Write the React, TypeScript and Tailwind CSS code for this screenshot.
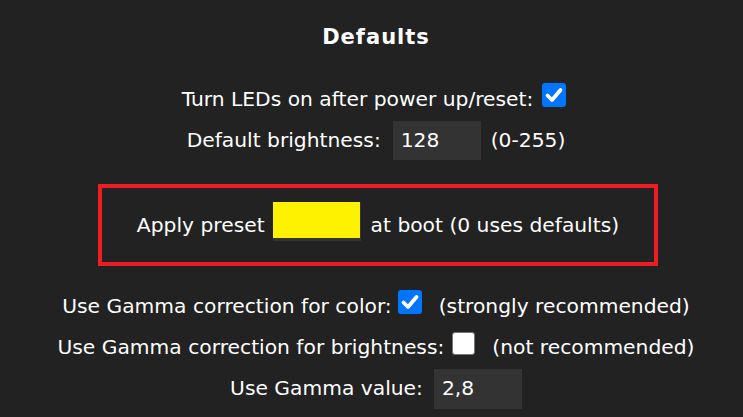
import React from "react";

const font = { fontFamily: '"DejaVu Sans", Verdana, sans-serif' };

function Check({ checked }: { checked: boolean }) {
  if (!checked) {
    return (
      <span className="inline-block h-[23px] w-[23px] shrink-0 rounded-[3px] border border-[#767676] bg-white" />
    );
  }
  return (
    <span className="inline-flex h-[24px] w-[24px] shrink-0 items-center justify-center rounded-[3px] bg-[#0075ff]">
      <svg viewBox="0 0 24 24" className="h-[24px] w-[24px]">
        <path
          d="M5.5 12.5 L10 17 L18.5 7"
          fill="none"
          stroke="#fff"
          strokeWidth="3.8"
          strokeLinecap="round"
          strokeLinejoin="round"
        />
      </svg>
    </span>
  );
}

function Field({ value, yellow }: { value: string; yellow?: boolean }) {
  return (
    <span className="relative inline-flex h-[39px] w-[88px] shrink-0 items-center bg-[#333] pl-2 text-white">
      {value}
      {yellow && <span className="absolute left-0 top-0 h-[36px] w-[87px] bg-[#fff200]" />}
    </span>
  );
}

function Row({ children, className = "" }: { children: React.ReactNode; className?: string }) {
  return (
    <div className={"flex h-[41px] items-center justify-center whitespace-pre " + className}>
      {children}
    </div>
  );
}

export default function App() {
  return (
    <div
      className="min-h-[417px] w-[743px] overflow-hidden bg-[#222] pl-[9px] text-[20.25px] text-white"
      style={font}
    >
      <div className="flex h-[76px] items-center justify-center text-[21px] font-bold tracking-[1px]">
        Defaults
      </div>

      <Row className="mt-[3px] -translate-x-[2px]">
        <span>Turn LEDs on after power up/reset:</span>
        <span className="ml-[9px]">
          <Check checked />
        </span>
      </Row>
      <Row>
        <span>Default brightness:</span>
        <span className="ml-[12px]">
          <Field value="128" />
        </span>
        <span className="ml-[10px]">(0-255)</span>
      </Row>

      <div className="mx-auto mt-[23px] flex h-[82px] w-[560px] translate-x-[2px] items-center justify-center whitespace-pre border-[4px] border-[#ee1c25]">
        <span>Apply preset</span>
        <span className="ml-[8px] mt-[2px]">
          <Field value="" yellow />
        </span>
        <span className="ml-[10px]">at boot (0 uses defaults)</span>
      </div>

      <Row className="mt-[20px]">
        <span>Use Gamma correction for color:</span>
        <span className="ml-[6px]">
          <Check checked />
        </span>
        <span className="ml-[17px]">(strongly recommended)</span>
      </Row>
      <Row>
        <span>Use Gamma correction for brightness:</span>
        <span className="ml-[8px]">
          <Check checked={false} />
        </span>
        <span className="ml-[17px]">(not recommended)</span>
      </Row>
      <Row>
        <span>Use Gamma value:</span>
        <span className="ml-[11px]">
          <span className="inline-flex h-[40px] w-[88px] items-center bg-[#333] pl-2">2,8</span>
        </span>
      </Row>
    </div>
  );
}
